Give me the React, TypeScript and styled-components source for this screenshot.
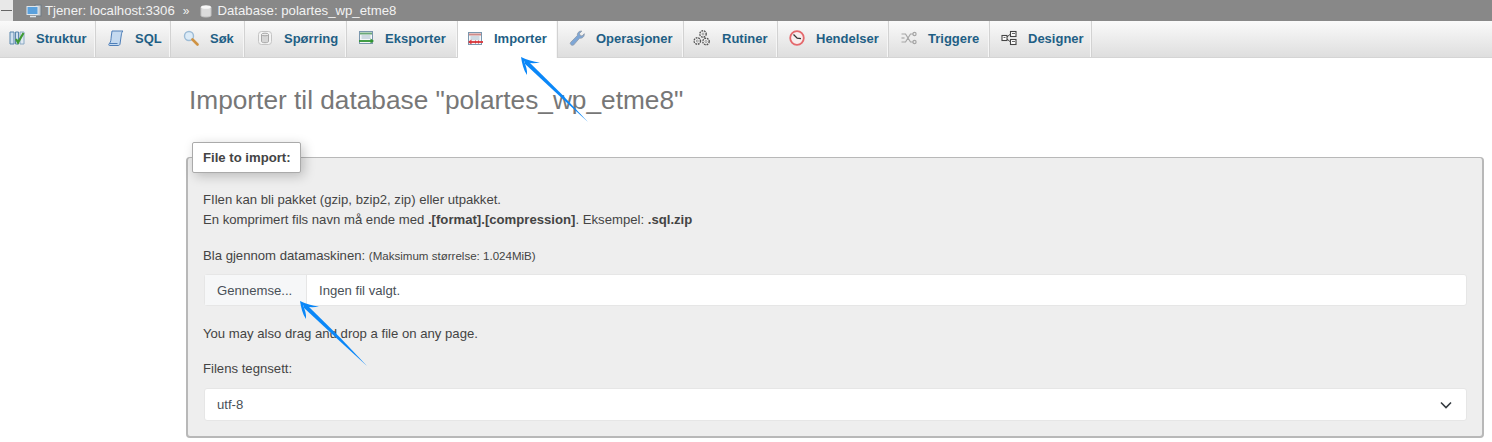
import React from 'react'
import styled, { createGlobalStyle } from 'styled-components'

const GlobalStyle = createGlobalStyle`
  html, body {
    margin: 0;
    padding: 0;
    background: #fff;
    overflow: hidden;
  }
  body {
    font-family: 'Liberation Sans', Arial, sans-serif;
    color: #444;
  }
`

const Page = styled.div`
  position: relative;
  width: 1492px;
  height: 442px;
  overflow: hidden;
`
const TopBar = styled.div`
  display: flex;
  align-items: center;
  height: 21px;
  background: #888;
  color: #f2f2f2;
  font-size: 13.2px;
`
const CollapseBox = styled.div`
  display: flex;
  align-items: center;
  justify-content: center;
  width: 13px;
  height: 21px;
  background: #e8e8e8;
  margin-right: 13px;
`
const Crumb = styled.span<{ $gap: number }>`
  display: flex;
  align-items: center;
  gap: ${(props) => props.$gap}px;
`
const CrumbSep = styled.span`
  margin: 0 11px 0 8px;
  font-size: 12px;
`
const TabBar = styled.nav`
  display: flex;
  height: 36px;
  background: linear-gradient(#fafafa, #dedede);
  border-bottom: 1px solid #d4d4d4;
  box-sizing: content-box;
`
const Tab = styled.a<{ $active?: boolean; $width: number; $pad: number }>`
  display: flex;
  align-items: center;
  gap: 11px;
  box-sizing: border-box;
  width: ${(props) => props.$width}px;
  padding: 0 0 2px ${(props) => props.$pad}px;
  height: ${(props) => (props.$active ? 37 : 36)}px;
  border-right: 1px solid #d2d2d2;
  box-shadow: inset -1px 0 0 #f6f6f6;
  background: ${(props) => (props.$active ? '#fff' : 'transparent')};
  color: #1f5f85;
  font-size: 13px;
  font-weight: bold;
  white-space: nowrap;
`
const Content = styled.main`
  padding: 0 8px 0 186px;
`
const Title = styled.h2`
  margin: 0;
  padding: 25px 0 0 3px;
  height: 84px;
  box-sizing: border-box;
  font-size: 26.25px;
  line-height: 34px;
  font-weight: normal;
  color: #777;
`
const Fieldset = styled.fieldset`
  margin: 0;
  padding: 16px 15px 16px 15px;
  height: 296px;
  box-sizing: border-box;
  background: #eee;
  border-style: solid;
  border-width: 1px 2px 2px 2px;
  border-color: #b8b8b8;
  border-radius: 4px;
`
const Legend = styled.legend`
  margin-left: -11px;
  padding: 0 10px;
  height: 31px;
  line-height: 29px;
  box-sizing: border-box;
  width: 109px;
  background: #fff;
  border: 1px solid #aaa;
  border-radius: 2px;
  box-shadow: 3px 3px 12px rgba(0, 0, 0, 0.22);
  font-size: 13.15px;
  font-weight: bold;
  color: #444;
  white-space: nowrap;
`
const Note = styled.p<{ $after: number }>`
  margin: 0 0 ${(props) => props.$after}px;
  font-size: 13.15px;
  line-height: 20px;
  color: #444;
`
const Intro = styled(Note)`
  margin-top: 1px;
`
const Small = styled.small`
  font-size: 11.55px;
`
const InputGroup = styled.div`
  display: flex;
  align-items: stretch;
  height: 32px;
  margin: 0 0 18px 1px;
  background: #fff;
  border: 1px solid #e6e6e6;
  border-radius: 3px;
  box-sizing: border-box;
  font-size: 13.15px;
  color: #495057;
`
const BrowseButton = styled.div`
  display: flex;
  align-items: center;
  width: 102px;
  padding-left: 12px;
  box-sizing: border-box;
  background: #f6f7f8;
  border-right: 1px solid #e6e6e6;
`
const FileName = styled.div`
  display: flex;
  align-items: center;
  padding-left: 12px;
`
const SelectBox = styled.div`
  display: flex;
  align-items: center;
  justify-content: space-between;
  height: 33px;
  margin-left: 1px;
  padding: 0 14px 0 12px;
  background: #fff;
  border: 1px solid #e6e6e6;
  border-radius: 3px;
  box-sizing: border-box;
  font-size: 13.15px;
  color: #495057;
`
const ArrowOverlay = styled.svg`
  position: absolute;
  left: 0;
  top: 0;
  pointer-events: none;
`

const ico = { width: 16, height: 16, viewBox: '0 0 16 16' }

const StructureIcon = () => (
  <svg {...ico}>
    <path d="M1 2h4v12H1zM6.500 2h3v12h-3z" fill="#cfe0ee" stroke="#5b87ad" />
    <path d="M11 2h4v12h-4z" fill="#dfe9f2" stroke="#8aa9c4" />
    <path d="M7 9l2 3.500L14.500 3" fill="none" stroke="#3f9a32" strokeWidth="2.200" />
  </svg>
)
const SqlIcon = () => (
  <svg {...ico}>
    <path d="M4 1h11c-1.500 1-1.500 3-2 6l-1 7c-.3 1.300-1 1.500-2 1.500H1.500c-1 0-1-1.200 0-2.200C3 12 3 9 3.300 6z" fill="#c4d9ef" stroke="#4f7fb8" />
    <path d="M1.500 13.500h8" stroke="#4f7fb8" fill="none" />
  </svg>
)
const SearchIcon = () => (
  <svg {...ico}>
    <circle cx="6" cy="6" r="4.500" fill="#dcebf7" stroke="#9dbcd6" strokeWidth="1.400" />
    <path d="M9.500 9.500l5 5" stroke="#cf9242" strokeWidth="2.600" strokeLinecap="round" />
  </svg>
)
const QueryIcon = () => (
  <svg {...ico}>
    <rect x="1.500" y="1.500" width="13" height="13" rx="3" fill="#f4f4f4" stroke="#c4c4c4" />
    <path d="M4.500 4.500v7c0 1.600 7 1.600 7 0v-7" fill="#d6d6d6" stroke="#a8a8a8" />
    <ellipse cx="8" cy="4.500" rx="3.500" ry="1.300" fill="#ececec" stroke="#a8a8a8" />
  </svg>
)
const TableArrowIcon = ({ color, header, head }: { color: string; header: string; head: 'left' | 'right' }) => (
  <svg {...ico}>
    <rect x="1.500" y="1.500" width="13" height="12" fill="#f3f6f9" stroke="#7b97ae" />
    <path d="M2 3.500h12" stroke={header} strokeWidth="2" />
    <path d="M3.500 6h9M3.500 8h9" stroke="#a9bccb" />
    <path d={head === 'right' ? 'M1 11h13' : 'M2 11h14'} stroke={color} strokeWidth="1.800" />
    <path d={head === 'right' ? 'M12.500 8.500l3.500 2.500-3.500 2.500z' : 'M4.500 8.500L1 11l3.500 2.500z'} fill={color} />
    {head === 'left' && <path d="M8.500 9.500v3M11.500 9.500v3" stroke={color} />}
  </svg>
)
const WrenchIcon = () => (
  <svg {...ico}>
    <path
      d="M1.500 12.500L8.300 5.600C8 3.500 9.500 .8 12.800 1L10.500 3.500l.6 2 2 .5L15.300 3.700c.3 3-2.300 5-4.700 4.500l-6 6.800c-1.300 1.200-4.300-1-3.100-2.500z"
      fill="#7ea6d6"
      stroke="#8f9aa8"
      strokeWidth=".8"
    />
  </svg>
)
const GearsIcon = () => (
  <svg width="18" height="16" viewBox="0 0 18 16">
    <g fill="#f2f2f2" stroke="#555" strokeWidth="1.400" strokeDasharray="1.800 .8">
      <circle cx="10" cy="4" r="3.200" />
      <circle cx="4.300" cy="11" r="3.200" />
      <circle cx="13" cy="11.500" r="3.200" />
    </g>
    <g fill="#fff" stroke="#777" strokeWidth=".7">
      <circle cx="10" cy="4" r="1" />
      <circle cx="4.300" cy="11" r="1" />
      <circle cx="13" cy="11.500" r="1" />
    </g>
  </svg>
)
const ClockIcon = () => (
  <svg {...ico}>
    <circle cx="8" cy="8" r="6.800" fill="#f8eeee" stroke="#e4686c" strokeWidth="1.800" />
    <path d="M4.500 4.500L8.200 8.200 12 8.700" fill="none" stroke="#333" strokeWidth="1.300" />
  </svg>
)
const TriggerIcon = () => (
  <svg {...ico}>
    <g fill="none" stroke="#a6a6a6" strokeWidth="1.200">
      <path d="M.5 4h4l5 8h3M.5 12h4l5-8h3" />
      <circle cx="13.500" cy="4" r="1.600" />
      <circle cx="13.500" cy="12" r="1.600" />
      <path d="M.5 8h3" />
    </g>
  </svg>
)
const DesignerIcon = () => (
  <svg {...ico}>
    <g fill="#fff" stroke="#444" strokeWidth="1.100">
      <rect x="9.500" y="1.500" width="5.500" height="5" />
      <rect x="9.500" y="9.500" width="5.500" height="5" />
      <rect x="1" y="5.500" width="5" height="5" />
    </g>
    <path d="M6 7l3.500-3M6 9l3.500 3" stroke="#444" fill="none" />
    <path d="M11 3.500h3M11 11.500h3M2.500 7.500h2" stroke="#666" />
  </svg>
)
const ServerIcon = () => (
  <svg width="16" height="14" viewBox="0 0 16 14">
    <rect x="9" y="1" width="6" height="11" fill="#c4c9ce" stroke="#6f7a84" />
    <rect x="1" y="2.500" width="11" height="8" fill="#5aa0dc" stroke="#dfe6ec" />
    <path d="M4 12.500h6" stroke="#dfe6ec" strokeWidth="1.500" />
  </svg>
)
const DatabaseIcon = () => (
  <svg width="12" height="14" viewBox="0 0 12 14">
    <path d="M1 3v8.500c0 2 10 2 10 0V3" fill="#dcdcdc" stroke="#c4c4c4" />
    <ellipse cx="6" cy="3" rx="5" ry="1.800" fill="#f7f7f7" />
  </svg>
)

const tabs = [
  { label: 'Struktur', width: 96, pad: 9, icon: <StructureIcon /> },
  { label: 'SQL', width: 75, pad: 12, icon: <SqlIcon /> },
  { label: 'Søk', width: 74, pad: 12, icon: <SearchIcon /> },
  { label: 'Spørring', width: 102, pad: 12, icon: <QueryIcon /> },
  { label: 'Eksporter', width: 111, pad: 11, icon: <TableArrowIcon color="#2f9331" header="#6aa878" head="right" /> },
  { label: 'Importer', width: 100, pad: 9, icon: <TableArrowIcon color="#d9363a" header="#cf8a88" head="left" />, active: true },
  { label: 'Operasjoner', width: 126, pad: 11, icon: <WrenchIcon /> },
  { label: 'Rutiner', width: 94, pad: 9, icon: <GearsIcon /> },
  { label: 'Hendelser', width: 111, pad: 11, icon: <ClockIcon /> },
  { label: 'Triggere', width: 101, pad: 12, icon: <TriggerIcon /> },
  { label: 'Designer', width: 102, pad: 11, icon: <DesignerIcon /> },
]

function BlueArrow({ x, y }: { x: number; y: number }) {
  return (
    <g transform={`translate(${x} ${y})`} fill="#0a87f8">
      <path d="M6 3L40 36.500 67 65 38 38.500 3 6z" />
      <path d="M0 0C6 3 12 4.500 19 5.500 12 7 6 6 3 4.500 5 9 6.500 13 6 18 2.500 13 1 6 0 0z" />
    </g>
  )
}

export default function App() {
  return (
    <Page>
      <GlobalStyle />
      <TopBar>
        <CollapseBox>
          <svg width="11" height="5" viewBox="0 0 11 5">
            <path d="M0 2.500h11" stroke="#666" />
          </svg>
        </CollapseBox>
        <Crumb $gap={3}>
          <ServerIcon /> Tjener: localhost:3306
        </Crumb>
        <CrumbSep>»</CrumbSep>
        <Crumb $gap={5}>
          <DatabaseIcon /> Database: polartes_wp_etme8
        </Crumb>
      </TopBar>
      <TabBar>
        {tabs.map((tab) => (
          <Tab key={tab.label} $active={tab.active} $width={tab.width} $pad={tab.pad}>
            {tab.icon}
            {tab.label}
          </Tab>
        ))}
      </TabBar>
      <Content>
        <Title>Importer til database "polartes_wp_etme8"</Title>
        <Fieldset>
          <Legend>File to import:</Legend>
          <Intro $after={16}>
            FIlen kan bli pakket (gzip, bzip2, zip) eller utpakket.
            <br />
            En komprimert fils navn må ende med <b>.[format].[compression]</b>. Eksempel: <b>.sql.zip</b>
          </Intro>
          <Note $after={8}>
            Bla gjennom datamaskinen: <Small>(Maksimum størrelse: 1.024MiB)</Small>
          </Note>
          <InputGroup>
            <BrowseButton>Gennemse...</BrowseButton>
            <FileName>Ingen fil valgt.</FileName>
          </InputGroup>
          <Note $after={15}>You may also drag and drop a file on any page.</Note>
          <Note $after={9}>Filens tegnsett:</Note>
          <SelectBox>
            utf-8
            <svg width="12" height="8" viewBox="0 0 12 8">
              <path d="M1 1.500l5 5 5-5" fill="none" stroke="#343a40" strokeWidth="1.600" />
            </svg>
          </SelectBox>
        </Fieldset>
      </Content>
      <ArrowOverlay width="1492" height="442">
        <BlueArrow x={521} y={57} />
        <BlueArrow x={300} y={301} />
      </ArrowOverlay>
    </Page>
  )
}
